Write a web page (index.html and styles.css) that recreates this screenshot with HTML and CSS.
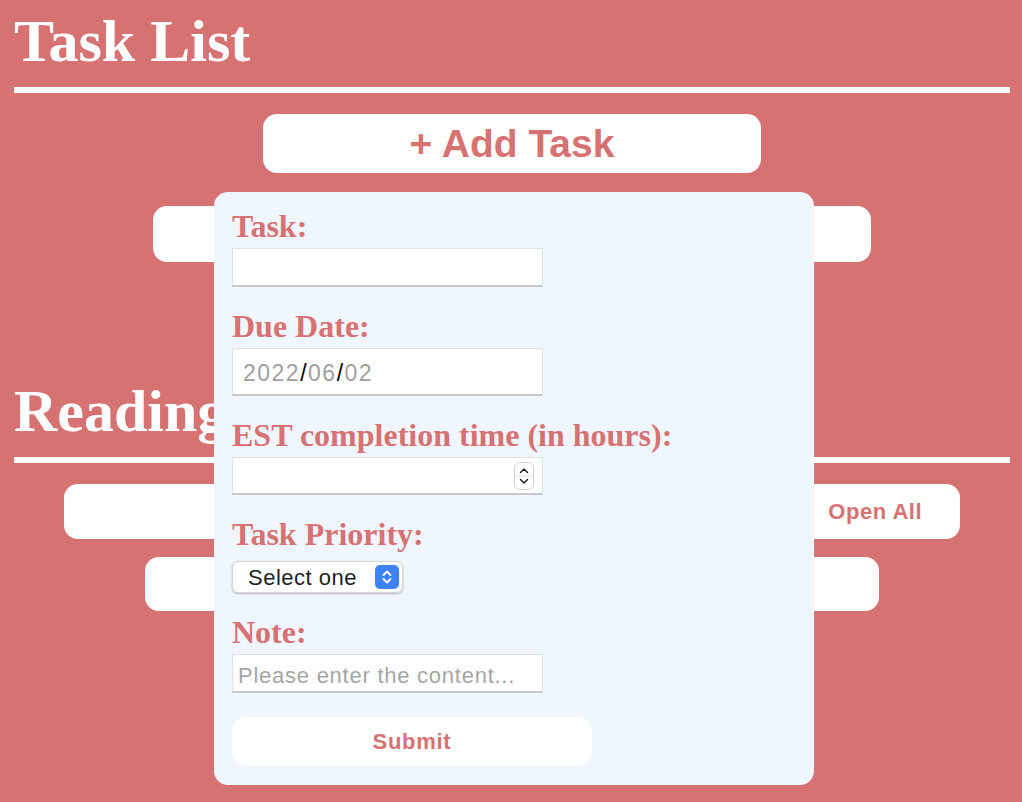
FILE: index.html
```html
<!DOCTYPE html>
<html lang="en">
<head>
<meta charset="utf-8">
<title>Task List</title>
<link rel="stylesheet" href="styles.css">
</head>
<body>
<div class="page">
  <section class="section">
    <h1 class="section-title">Task List</h1>
    <button class="add-btn" type="button">+ Add Task</button>
    <div class="row row-task"></div>
  </section>
  <section class="section section-reading">
    <h1 class="section-title">Reading List</h1>
    <div class="row row-wide"><span class="row-action">Open All</span></div>
    <div class="row row-read"></div>
  </section>
</div>

<form class="modal">
  <label class="label label-first" for="task">Task:</label>
  <input class="field" id="task" type="text">

  <label class="label">Due Date:</label>
  <div class="field field-date"><span>2022</span><span class="sep">/</span><span>06</span><span class="sep">/</span><span>02</span></div>

  <label class="label" for="hours">EST completion time (in hours):</label>
  <div class="field field-num">
    <input class="num-input" id="hours" type="text">
    <svg class="spinner" width="20" height="28" viewBox="0 0 20 28">
      <rect x="0.5" y="0.5" width="19" height="27" rx="5" fill="#fff" stroke="#cfcfcf"/>
      <line x1="1" y1="14" x2="19" y2="14" stroke="#e2e2e2"/>
      <path d="M6.5 10.5 L10 7 L13.5 10.5" fill="none" stroke="#222" stroke-width="1.5" stroke-linecap="round" stroke-linejoin="round"/>
      <path d="M6.5 17.5 L10 21 L13.5 17.5" fill="none" stroke="#222" stroke-width="1.5" stroke-linecap="round" stroke-linejoin="round"/>
    </svg>
  </div>

  <label class="label" for="prio">Task Priority:</label>
  <div class="select-wrap">
    <select class="select" id="prio"><option>Select one</option></select>
    <svg class="select-icon" width="24" height="24" viewBox="0 0 24 24">
      <rect width="24" height="24" rx="5" fill="#3e83f5"/>
      <path d="M8.5 10 L12 6.5 L15.5 10" fill="none" stroke="#fff" stroke-width="1.8" stroke-linecap="round" stroke-linejoin="round"/>
      <path d="M8.5 14 L12 17.5 L15.5 14" fill="none" stroke="#fff" stroke-width="1.8" stroke-linecap="round" stroke-linejoin="round"/>
    </svg>
  </div>

  <label class="label" for="note">Note:</label>
  <input class="field field-note" id="note" type="text" placeholder="Please enter the content...">

  <button class="submit" type="button">Submit</button>
</form>
</body>
</html>
```

FILE: styles.css
```css
html, body {
  margin: 0;
  padding: 0;
}

body {
  background: #d77272;
  font-family: "Liberation Sans", Arial, sans-serif;
  min-height: 802px;
  position: relative;
}

.page {
  padding: 11px 12px 0 14px;
}

.section-title {
  margin: 0;
  padding-bottom: 16px;
  border-bottom: 6px solid #fff;
  font: bold 60px/1 "Liberation Serif", "Times New Roman", serif;
  color: #fff;
}

.add-btn {
  display: block;
  width: 498px;
  height: 59px;
  margin: 21px auto 0;
  border: none;
  border-radius: 14px;
  background: #fff;
  color: #d77272;
  font: bold 39px/1 "Liberation Sans", Arial, sans-serif;
  padding: 0;
}

.row {
  background: #fff;
  border-radius: 14px;
  margin-left: auto;
  margin-right: auto;
}

.row-task {
  width: 718px;
  height: 56px;
  margin-top: 33px;
}

.section-reading {
  margin-top: 119px;
}

.row-wide {
  width: 896px;
  height: 55px;
  margin-top: 21px;
  display: flex;
  align-items: center;
  justify-content: flex-end;
  box-sizing: border-box;
  padding-right: 38px;
}

.row-action {
  color: #d77272;
  font: bold 22px/1 "Liberation Sans", Arial, sans-serif;
  letter-spacing: 0.5px;
}

.row-read {
  width: 734px;
  height: 54px;
  margin-top: 18px;
}

/* Modal form */
.modal {
  position: absolute;
  left: 214px;
  top: 192px;
  width: 600px;
  box-sizing: border-box;
  padding: 16px 18px 19px;
  background: #f0f6fe;
  border-radius: 14px;
}

.label {
  display: block;
  margin: 21px 0 4px;
  font: bold 32px/36px "Liberation Serif", "Times New Roman", serif;
  color: #d77272;
}

.label-first {
  margin-top: 0;
}

.field {
  display: block;
  box-sizing: border-box;
  width: 311px;
  height: 39px;
  margin: 0;
  border: 1px solid #dde2e8;
  border-bottom: 2px solid #c6c8cb;
  background: #fff;
  font: 22px "Liberation Sans", Arial, sans-serif;
  padding: 0 5px;
  outline: none;
}

.field-date {
  height: 48px;
  display: flex;
  align-items: center;
  padding-left: 10px;
  padding-top: 3px;
  color: #a0a0a0;
  font-size: 23px;
  letter-spacing: 1.5px;
}

.field-date .sep {
  color: #000;
}

.field-num {
  height: 38px;
  display: flex;
  align-items: center;
  padding-right: 8px;
}

.num-input {
  flex: 1;
  min-width: 0;
  border: none;
  outline: none;
  background: transparent;
  font: inherit;
  padding: 0;
}

.spinner {
  display: block;
  flex: none;
}

.select-wrap {
  position: relative;
  width: 171px;
  margin-top: 9px;
}

.select {
  display: block;
  appearance: none;
  -webkit-appearance: none;
  width: 171px;
  height: 32px;
  box-sizing: border-box;
  border: 1px solid #d6d6d6;
  border-radius: 6px;
  background: #fff;
  box-shadow: 0 1px 2px rgba(0, 0, 0, 0.25);
  font: 22px "Liberation Sans", Arial, sans-serif;
  letter-spacing: 0.5px;
  color: #1f1f1f;
  padding: 0 0 0 15px;
  margin: 0;
}

.select-icon {
  position: absolute;
  right: 4px;
  top: 4px;
  pointer-events: none;
}

.field-note {
  letter-spacing: 0.75px;
  padding-top: 5px;
}

.field-note::placeholder {
  color: #a6a6a6;
}

.submit {
  display: block;
  width: 360px;
  height: 49px;
  margin-top: 24px;
  border: none;
  border-radius: 14px;
  background: #fff;
  color: #d77272;
  font: bold 22px/1 "Liberation Sans", Arial, sans-serif;
  letter-spacing: 0.7px;
  padding: 0;
}
```
